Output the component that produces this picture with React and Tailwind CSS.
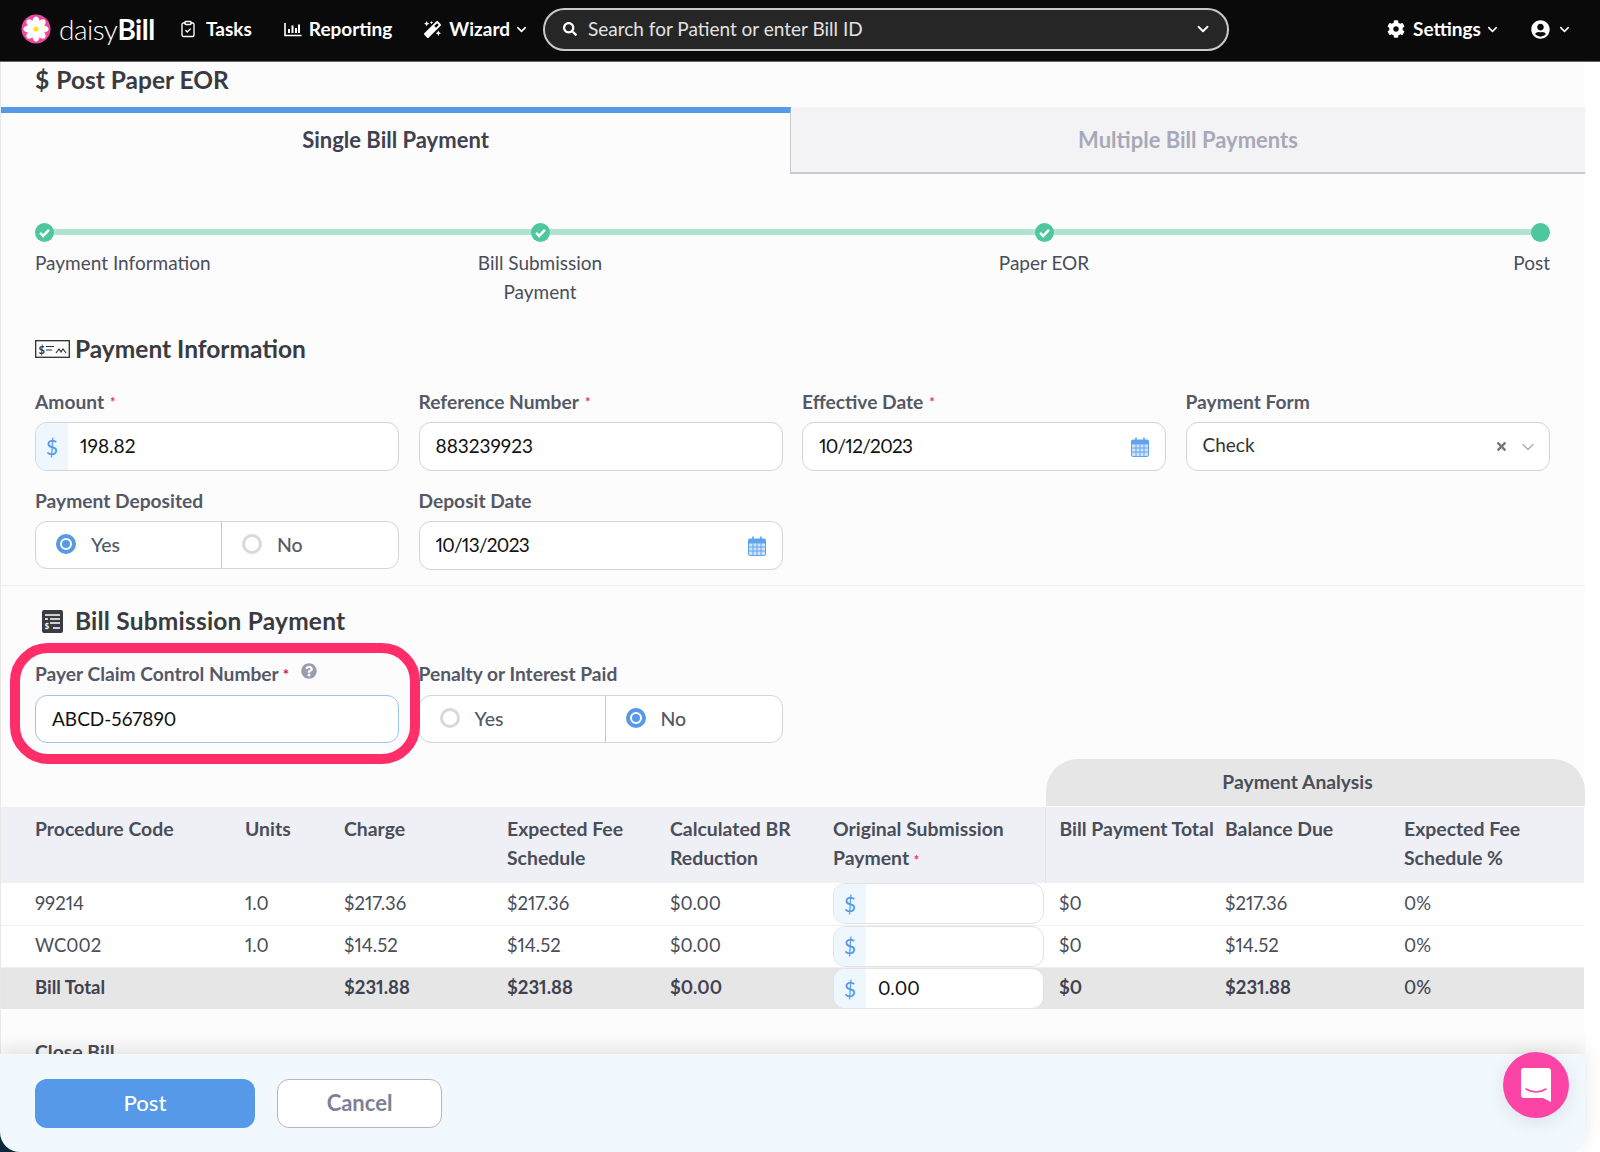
import React from "react";
import { FaCog, FaUserCircle, FaMagic, FaSearch, FaQuestionCircle, FaTimes } from "react-icons/fa";
import { ChevronDown, ClipboardCheck } from "lucide-react";

const FONT = "font-['Lato','Liberation_Sans',sans-serif] proportional-nums";

function Daisy() {
  const petals = [0, 45, 90, 135, 180, 225, 270, 315];
  return (
    <svg width="30" height="30" viewBox="0 0 30 30">
      <circle cx="15" cy="15" r="14.5" fill="#f0479f" />
      {petals.map((a) => (
        <ellipse key={a} cx="15" cy="8" rx="3.6" ry="5.6" fill="#fff" transform={`rotate(${a} 15 15)`} />
      ))}
      <circle cx="15" cy="15" r="2.6" fill="#ffe01a" />
    </svg>
  );
}

function BarsIcon() {
  return (
    <svg width="18" height="15" viewBox="0 0 18 15" fill="none" stroke="#fff">
      <path d="M1 1v12.5h16.5" strokeWidth="1.6" />
      <path d="M5 11V7M8.5 11V3.5M12 11V6M15 11V2.5" strokeWidth="2" />
    </svg>
  );
}

function NavItem({ icon, label, chevron, className }) {
  return (
    <div className={`flex items-center text-white text-[19px] font-bold ${className}`}>
      {icon}
      <span>{label}</span>
      {chevron && <ChevronDown size={15} strokeWidth={2.5} className="ml-[4px]" />}
    </div>
  );
}

function Header() {
  return (
    <header className="h-[62px] shrink-0 bg-[#0a0a0a] border-b border-[#666] flex items-center pb-[3px]">
      <div className="ml-[21px]"><Daisy /></div>
      <div className="ml-[8px] text-white text-[28px] leading-none tracking-[-0.5px] w-[95px]">
        <span className="font-light">daisy</span><span className="font-bold">Bill</span>
      </div>
      <NavItem className="ml-[25px]" icon={<ClipboardCheck size={18} strokeWidth={1.8} className="mr-[9px]" />} label="Tasks" />
      <NavItem className="ml-[32px]" icon={<span className="mr-[7px]"><BarsIcon /></span>} label="Reporting" />
      <NavItem className="ml-[32px]" icon={<FaMagic size={17} className="mr-[8px]" />} label="Wizard" chevron />
      <div className="ml-[14px] w-[686px] h-[43px] rounded-full bg-[#262626] border-2 border-[#c9c9c9] flex items-center pl-[18px] pr-[15px]">
        <FaSearch size={14} className="text-white" />
        <span className="ml-[11px] text-[19px] text-[#e2e2e2] flex-1">Search for Patient or enter Bill ID</span>
        <ChevronDown size={18} strokeWidth={2.5} className="text-white" />
      </div>
      <NavItem className="ml-[158px]" icon={<FaCog size={18} className="mr-[8px]" />} label="Settings" chevron />
      <div className="ml-[31px] flex items-center text-white">
        <FaUserCircle size={19} />
        <ChevronDown size={15} strokeWidth={2.5} className="ml-[7px]" />
      </div>
    </header>
  );
}

function Check() {
  return (
    <svg width="19" height="19" viewBox="0 0 18 18" className="relative">
      <circle cx="9" cy="9" r="9" fill="#4cc79e" />
      <path d="M4.8 9.4l2.9 2.8L13.2 6.4" fill="none" stroke="#fff" strokeWidth="2.4" />
    </svg>
  );
}

function Stepper() {
  return (
    <div className="relative mt-[49px] px-[34px]">
      <div className="absolute left-[44px] right-[44px] top-[6px] h-[6px] bg-[#aee4d0]" />
      <div className="grid grid-cols-[257px_496px_512px_250px] text-[19px] text-[#4a4d5a] leading-[29px]">
        <div className="flex flex-col items-start">
          <Check />
          <div className="mt-[6px]">Payment Information</div>
        </div>
        <div className="flex flex-col items-center text-center">
          <Check />
          <div className="mt-[6px]">Bill Submission<br />Payment</div>
        </div>
        <div className="flex flex-col items-center">
          <Check />
          <div className="mt-[6px]">Paper EOR</div>
        </div>
        <div className="flex flex-col items-end">
          <div className="relative w-[19px] h-[19px] rounded-full bg-[#4cc79e]" />
          <div className="mt-[6px]">Post</div>
        </div>
      </div>
    </div>
  );
}

function Label({ children, req }) {
  return (
    <div className="h-[24px] flex items-center text-[19.2px] font-bold text-[#555866] leading-none">
      {children}
      {req && <span className="ml-[6px] text-[#f0315f] text-[13px]">*</span>}
    </div>
  );
}

function Box({ children, className = "" }) {
  return (
    <div className={`mt-[8px] h-[49px] bg-white border border-[#d4d4d8] rounded-[12px] flex items-center text-[19px] text-[#111] overflow-hidden ${className}`}>
      {children}
    </div>
  );
}

function DollarAddon() {
  return (
    <div className="h-full w-[32px] bg-[#eef6fe] text-[#5599e8] flex items-center justify-center shrink-0 text-[21px]">$</div>
  );
}

function Radio({ on }) {
  return on
    ? <span className="mb-[2px] w-[20px] h-[20px] rounded-full border-[4px] border-[#5599e8] bg-white flex items-center justify-center"><span className="w-[8px] h-[8px] rounded-full bg-[#5599e8]" /></span>
    : <span className="mb-[2px] w-[20px] h-[20px] rounded-full border-[3px] border-[#d9d9d9] bg-white" />;
}

function RadioGroup({ yes, mt }) {
  return (
    <div className={`${mt} h-[48px] bg-white border border-[#d4d4d8] rounded-[12px] flex text-[19.5px] text-[#555866] font-medium`}>
      <div className="w-[186px] border-r border-[#c8c8cc] flex items-center pl-[20px] gap-[15px]">
        <Radio on={yes} /><span>Yes</span>
      </div>
      <div className="flex-1 flex items-center pl-[20px] gap-[15px]">
        <Radio on={!yes} /><span>No</span>
      </div>
    </div>
  );
}

function CheckIcon() {
  return (
    <svg width="35" height="18" viewBox="0 0 35 18" fill="none" stroke="#2f3036">
      <rect x="0.7" y="0.7" width="33.6" height="16.6" strokeWidth="1.3" />
      <text x="3.5" y="13.5" fontSize="11" fontWeight="700" fill="#2f3036" stroke="none">$</text>
      <path d="M11 6.5h8M11 10h6M21 13l3-4 2 3 2-3 3 4" strokeWidth="1.2" />
    </svg>
  );
}

function LedgerIcon() {
  return (
    <svg width="21" height="23" viewBox="0 0 21 23">
      <rect width="21" height="23" rx="2" fill="#3b3c42" />
      <path d="M3 5h15M3 9h3M8 9h10M8 13h10M11 18h7" stroke="#fff" strokeWidth="1.6" />
      <text x="2.6" y="19" fontSize="8" fontWeight="700" fill="#fff">$</text>
    </svg>
  );
}

function Calendar() {
  return (
    <svg width="18" height="20" viewBox="0 0 18 20" fill="none">
      <rect x="0.5" y="3" width="17" height="16.5" rx="1.5" fill="#cfe3fb" stroke="#5fa2ee" />
      <rect x="0.5" y="3" width="17" height="4.5" fill="#5fa2ee" />
      <path d="M1 11h16M1 15h16M5 7.5V19M9 7.5V19M13 7.5V19" stroke="#5fa2ee" />
      <path d="M5 1v4M13 1v4" stroke="#5fa2ee" strokeWidth="1.6" strokeLinecap="round" />
    </svg>
  );
}

const COLS = ["w-[244px]", "w-[99px]", "w-[163px]", "w-[163px]", "w-[163px]", "w-[212px]", "w-[180px]", "w-[179px]", "w-[180px]"];

function MoneyInput({ value }) {
  return (
    <div className="h-[41px] bg-white border border-[#e2e2e4] rounded-[12px] flex items-center overflow-hidden text-[19px] text-[#111] font-normal">
      <div className="h-full w-[32px] bg-[#eef6fe] text-[#5599e8] flex items-center justify-center text-[21px] shrink-0">$</div>
      <span className="ml-[12px]">{value}</span>
    </div>
  );
}

function Row({ cells, total }) {
  const cls = total ? "bg-[#e6e6e6] font-bold text-[#3f4250]" : "bg-white text-[#4a4d5a]";
  return (
    <tr className={`h-[42px] text-[18.5px] ${cls} ${total ? "" : "border-b border-[#f0f0f2]"}`}>
      <td className="pl-[34px]">{cells[0]}</td>
      <td>{cells[1]}</td>
      <td>{cells[2]}</td>
      <td>{cells[3]}</td>
      <td>{cells[4]}</td>
      <td className="pr-px"><MoneyInput value={cells[5]} /></td>
      <td className="pl-[14px]">{cells[6]}</td>
      <td>{cells[7]}</td>
      <td className={total ? "font-medium" : ""}>{cells[8]}</td>
    </tr>
  );
}

function BillTable() {
  const th = "text-left font-bold align-top pt-[7px]";
  return (
    <div>
      <div className="flex justify-end">
        <div className="w-[539px] h-[47px] mb-px bg-[#e6e6e6] rounded-t-[32px] flex items-center justify-center pr-[36px] text-[19.3px] font-bold text-[#4a4d5a]">Payment Analysis</div>
      </div>
      <table className="table-fixed w-[1583px] border-collapse">
        <colgroup>{COLS.map((c, i) => <col key={i} className={c} />)}</colgroup>
        <thead>
          <tr className="h-[76px] bg-[#eef0f5] text-[19.4px] leading-[29px] text-[#4a4d5a]">
            <th className={`${th} pl-[34px]`}>Procedure Code</th>
            <th className={th}>Units</th>
            <th className={th}>Charge</th>
            <th className={th}>Expected Fee<br />Schedule</th>
            <th className={th}>Calculated BR<br />Reduction</th>
            <th className={th}>Original Submission<br />Payment <span className="text-[#f0315f] text-[13px]">*</span></th>
            <th className={`${th} pl-[14px] border-l border-[#e4e4e8] whitespace-nowrap`}>Bill Payment Total</th>
            <th className={th}>Balance Due</th>
            <th className={th}>Expected Fee<br />Schedule %</th>
          </tr>
        </thead>
        <tbody>
          <Row cells={["99214", "1.0", "$217.36", "$217.36", "$0.00", "", "$0", "$217.36", "0%"]} />
          <Row cells={["WC002", "1.0", "$14.52", "$14.52", "$0.00", "", "$0", "$14.52", "0%"]} />
          <Row total cells={["Bill Total", "", "$231.88", "$231.88", "$0.00", "0.00", "$0", "$231.88", "0%"]} />
        </tbody>
      </table>
    </div>
  );
}

export default function App() {
  return (
    <div className={`relative w-[1600px] h-[1152px] bg-white overflow-hidden flex flex-col ${FONT}`}>
      <Header />
      <main className="w-[1585px] flex-1 min-h-0 overflow-hidden bg-[#fcfcfc] border-l border-[#e8e8e8]">
        <h1 className="h-[45px] pl-[34px] pb-[8px] flex items-center text-[24.5px] font-bold text-[#3a3b41] leading-none">
          <span className="mr-[7px]">$</span>Post Paper EOR
        </h1>
        <div className="flex h-[67px] text-[22px] font-bold">
          <div className="w-[790px] pb-[8px] border-t-[6px] border-[#5599e8] border-r border-r-[#c8cad2] flex items-center justify-center text-[#3f4250]">Single Bill Payment</div>
          <div className="flex-1 bg-[#f3f3f6] border-b-2 border-[#c8cad2] flex items-center justify-center text-[#a7a9b8]">Multiple Bill Payments</div>
        </div>

        <Stepper />

        <section className="px-[34px] mt-[28px]">
          <h2 className="h-[30px] flex items-center text-[24.5px] font-bold text-[#3a3b41]">
            <CheckIcon /><span className="ml-[5px]">Payment Information</span>
          </h2>
          <div className="mt-[26px] grid grid-cols-[364px_364px_364px_364px] gap-x-[19.5px]">
            <div>
              <Label req>Amount</Label>
              <Box><DollarAddon /><span className="ml-[12px]">198.82</span></Box>
            </div>
            <div>
              <Label req>Reference Number</Label>
              <Box><span className="ml-[16px]">883239923</span></Box>
            </div>
            <div>
              <Label req>Effective Date</Label>
              <Box className="justify-between px-[16px]"><span className="tracking-[-0.7px]">10/12/2023</span><Calendar /></Box>
            </div>
            <div>
              <Label>Payment Form</Label>
              <Box className="pl-[16px] pr-[11px]">
                <span className="flex-1 text-[#333] pb-[2px]">Check</span>
                <FaTimes size={13} className="text-[#777]" />
                <ChevronDown size={20} strokeWidth={1.5} className="ml-[10px] text-[#aaa]" />
              </Box>
            </div>
            <div className="mt-[18px]">
              <Label>Payment Deposited</Label>
              <RadioGroup yes mt="mt-[8px]" />
            </div>
            <div className="mt-[18px]">
              <Label>Deposit Date</Label>
              <Box className="justify-between px-[16px]"><span className="tracking-[-0.7px]">10/13/2023</span><Calendar /></Box>
            </div>
          </div>
        </section>

        <div className="mt-[15px] border-t border-[#eeeeee]" />

        <section className="px-[34px] mt-[20px]">
          <h2 className="h-[30px] flex items-center text-[24.5px] font-bold text-[#3a3b41]">
            <span className="ml-[7px]"><LedgerIcon /></span><span className="ml-[12px] tracking-[0.2px]">Bill Submission Payment</span>
          </h2>
          <div className="mt-[26px] grid grid-cols-[364px_364px_364px_364px] gap-x-[19.5px]">
            <div className="relative">
              <div className="absolute left-[-25px] right-[-21px] top-[-19px] h-[121px] border-[10px] border-[#ff2e69] rounded-[38px]" />
              <div className="h-[24px] flex items-center text-[19.2px] font-bold text-[#555866] leading-none">
                Payer Claim Control Number
                <span className="ml-[4px] text-[#e0162b] text-[15px]">*</span>
                <FaQuestionCircle size={16} className="ml-[12px] mb-[6px] text-[#9a9db0]" />
              </div>
              <div className="mt-[9px] h-[48px] bg-white border border-[#9cc3f2] rounded-[12px] flex items-center pl-[16px] text-[19px] text-[#111]">ABCD-567890</div>
            </div>
            <div>
              <Label>Penalty or Interest Paid</Label>
              <RadioGroup mt="mt-[9px]" />
            </div>
          </div>
        </section>

        <div className="mt-[16px]">
          <BillTable />
        </div>

        <div className="pl-[34px] mt-[28px] text-[19.4px] font-bold text-[#4a4d5a]">Close Bill</div>
      </main>
      <div className="h-[98px] shrink-0 w-[1585px] bg-[linear-gradient(90deg,#0e2a3a_20px,#fff_20px)]">
        <footer className="h-full bg-[#f1f8fe] rounded-bl-[20px] rounded-br-[14px] shadow-[0_-6px_18px_rgba(0,0,0,0.1)] flex items-center pl-[35px] gap-[22px]">
          <button className="w-[220px] h-[49px] pb-[2px] rounded-[12px] bg-[#5599e8] text-white text-[22px] font-medium">Post</button>
          <button className="w-[165px] h-[49px] pb-[2px] rounded-[12px] bg-white border border-[#b4b6c4] text-[#7d8096] text-[22px] font-bold">Cancel</button>
        </footer>
      </div>
      <div className="absolute left-[1503px] top-[1052px] w-[66px] h-[66px] rounded-full bg-[#fb44a5] flex items-center justify-center shadow-[0_4px_20px_rgba(0,0,0,0.1)]">
        <svg width="30" height="34" viewBox="0 0 30 34">
          <path d="M3 0h24a3 3 0 0 1 3 3v31l-8-4H3a3 3 0 0 1-3-3V3a3 3 0 0 1 3-3z" fill="#fff" />
          <path d="M5 21c6 4 14 4 20 0" fill="none" stroke="#fb44a5" strokeWidth="1.6" strokeLinecap="round" />
        </svg>
      </div>
    </div>
  );
}
